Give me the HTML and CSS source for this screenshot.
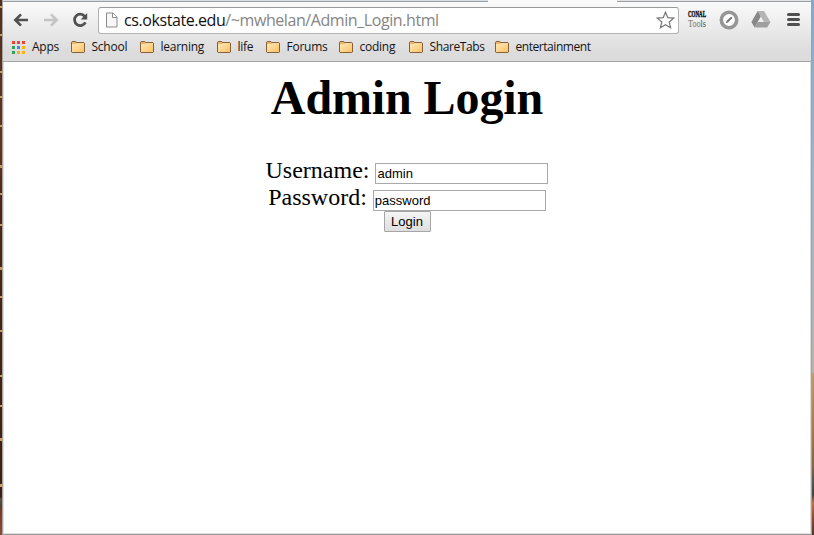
FILE: index.html
```html
<!DOCTYPE html>
<html lang="en">
<head>
<meta charset="utf-8">
<title>Admin Login</title>
<link rel="stylesheet" href="styles.css">
</head>
<body>
<svg class="defs" width="0" height="0">
  <defs>
    <linearGradient id="fold" x1="0" y1="0" x2="1" y2="1"><stop offset="0" stop-color="#ffe9b8"/><stop offset="1" stop-color="#fbc267"/></linearGradient>
    <symbol id="folder" viewBox="0 0 16 14">
      <path d="M1.5 12V2.2L2.2 1.5H5.8L6.5 2.5H13.8L14.5 3.2V12L13.8 12.5H2.2Z" fill="#e9b569" stroke="#87603b"/>
      <path d="M2 4.5L2.7 3.9H6.3L7.2 3H14V12H2Z" fill="url(#fold)"/>
    </symbol>
  </defs>
</svg>
<div class="desktop">
  <div class="edge left"></div>
  <div class="window">
    <header>
      <div class="tabs"><i class="tab-a"></i><i class="active"></i><i class="tab-b"></i></div>
      <div class="toolbar">
        <svg class="back" width="16" height="14" viewBox="0 0 16 14" fill="none" stroke="#505050" stroke-width="2.6"><path d="M15 7H3M8 1.3L2.3 7L8 12.7"/></svg>
        <svg class="forward" width="16" height="14" viewBox="0 0 16 14" fill="none" stroke="#c4c4c4" stroke-width="2.6"><path d="M1 7H13M8 1.3L13.7 7L8 12.7"/></svg>
        <svg class="reload" width="16" height="16" viewBox="0 0 16 16"><path d="M12.7 4.3A5.7 5.7 0 1 0 13.4 10.3" fill="none" stroke="#505050" stroke-width="2.7"/><path d="M15.2 1V7.5H8.7Z" fill="#505050"/></svg>
        <div class="address">
          <svg width="13" height="16" viewBox="0 0 13 16"><path d="M1.5 1H8L12 5V15H1.5Z" fill="#f8f8f8" stroke="#8b8b8b"/><path d="M7.5 1V5.5H12" fill="#fff" stroke="#8b8b8b"/></svg>
          <span class="url">cs.okstate.edu<span>/~mwhelan/Admin_Login.html</span></span>
          <svg class="star" width="19" height="18" viewBox="0 0 19 18"><path d="M9.5 1.2L11.8 6.6L17.7 7.1L13.2 11L14.6 16.7L9.5 13.7L4.4 16.7L5.8 11L1.3 7.1L7.2 6.6Z" fill="#fff" stroke="#777" stroke-width="1.2"/></svg>
        </div>
        <svg class="tools" width="22" height="24" viewBox="0 0 22 24"><text class="conal" x="1" y="9" textLength="18" lengthAdjust="spacingAndGlyphs">CONAL</text><text class="tool" x="1" y="19" textLength="18" lengthAdjust="spacingAndGlyphs">Too<tspan class="dark">ls</tspan></text></svg>
        <svg class="compass" width="20" height="20" viewBox="0 0 20 20"><circle cx="10" cy="10" r="7.7" fill="#fff" stroke="#969696" stroke-width="3.6"/><path d="M6.8 13.2L7.6 10.8L12 6.8L13.3 7.2L13 8.4L9 12.4Z" fill="#777"/></svg>
        <svg class="drive" width="20" height="17" viewBox="0 0 20 17"><path d="M6.7 0H13L19.4 11H13Z" fill="#b5b5b5"/><path d="M6.7 0L.4 11L3.6 16.5L9.8 5.5Z" fill="#888"/><path d="M6.8 11H19.4L16.2 16.5H3.6Z" fill="#9f9f9f"/></svg>
        <svg class="menu" width="13" height="13" viewBox="0 0 13 13"><path d="M1.5 1.5H11.5M1.5 6.5H11.5M1.5 11.5H11.5" stroke="#505050" stroke-width="3" stroke-linecap="round"/></svg>
      </div>
      <nav>
        <a class="apps"><svg width="13" height="13" viewBox="0 0 13 13"><path fill="#ea4335" d="M0 0h3v3H0zM5 0h3v3H5zM10 0h3v3h-3z"/><path fill="#34a05a" d="M0 5h3v3H0zM0 10h3v3H0z"/><path fill="#4285f4" d="M5 5h3v3H5z"/><path fill="#fbb30c" d="M10 5h3v3h-3zM5 10h3v3H5zM10 10h3v3h-3z"/></svg><span>Apps</span></a>
        <a class="school"><svg><use href="#folder"/></svg><span>School</span></a>
        <a class="learning"><svg><use href="#folder"/></svg><span>learning</span></a>
        <a class="life"><svg><use href="#folder"/></svg><span>life</span></a>
        <a class="forums"><svg><use href="#folder"/></svg><span>Forums</span></a>
        <a class="coding"><svg><use href="#folder"/></svg><span>coding</span></a>
        <a class="share"><svg><use href="#folder"/></svg><span>ShareTabs</span></a>
        <a class="fun"><svg><use href="#folder"/></svg><span>entertainment</span></a>
      </nav>
    </header>
    <main>
      <h1>Admin Login</h1>
      <form>
        <label class="row">Username: <input type="text" value="admin"></label>
        <label class="row">Password: <input type="text" value="password"></label>
        <button type="button">Login</button>
      </form>
    </main>
  </div>
  <div class="edge right"></div>
</div>
</body>
</html>
```
FILE: styles.css
```css
* { box-sizing: border-box; }
body { margin: 0; background: #fff; overflow: hidden; }
svg { flex: none; display: block; }
.defs { position: absolute; }
.desktop { display: flex; height: 535px; }
.edge { width: 2px; flex: none; }
.left { background:
  linear-gradient(transparent 497px, #5c5048 499px, #4c4038 506px, #7b3b22 510px, #8a4a30 535px),
  linear-gradient(transparent 6px, #c99a58 6px 8px, transparent 8px 34px, #c99a58 34px 36px, transparent 36px 71px, #c99a58 71px 73px, transparent 73px 96px, #c99a58 96px 98px, transparent 98px 125px, #c99a58 125px 127px, transparent 127px 165px, #c99a58 165px 168px, transparent 168px 193px, #c99a58 193px 195px, transparent 195px 224px, #c99a58 224px 226px, transparent 226px 267px, #c99a58 267px 270px, transparent 270px 296px, #c99a58 296px 298px, transparent 298px 330px, #c99a58 330px 332px, transparent 332px 375px, #c99a58 375px 377px, transparent 377px 405px, #c99a58 405px 407px, transparent 407px 438px, #d0a050 438px 441px, transparent 441px 484px, #d0a050 484px 487px, transparent 487px),
  linear-gradient(#54301b, #63341a 150px, #4c2714 200px, #3f1f11 500px); }
.right { background: linear-gradient(#83aad3 0, #9cb7d1 180px, #b9b5ad 372px, #c39b66 374px, #a67843 433px, #8c653e 465px, #56554a 482px, #44483f 495px, #c27243 503px, #8f4a2b 518px, #593324 535px); }
.window { width: 810px; flex: none; display: flex; flex-direction: column; border-left: 1px solid #a5a5a5; border-right: 1px solid #a0a0a0; border-bottom: 1px solid #999; background: #fff; }
header { height: 62px; background: linear-gradient(#fafafa 2px, #dcdcdc 52px); border-bottom: 1px solid #a4a4a4; flex: none; }
.tabs { display: flex; height: 2px; }
.tabs i { border-bottom: 1px solid #9a9fa4; background: #d8dde2; }
.tabs .tab-a { width: 485px; }
.tabs .active { width: 129px; background: #fafafa; border-color: #fafafa; }
.tabs .tab-b { flex: 1; background: #e2e2e2; }
.toolbar { display: flex; height: 35px; align-items: center; padding-left: 10px; }
.forward { margin-left: 14px; }
.reload { margin-left: 13px; }
.address { width: 581px; height: 27px; margin-left: 10px; margin-top: 1px; border: 1px solid #b2b2b2; border-top-color: #999; border-radius: 3px; background: #fff; display: flex; align-items: center; padding: 0 3px 0 6px; flex: none; }
.url { font: 16px/24px "Open Sans", sans-serif; letter-spacing: -.42px; margin-left: 6px; color: #111; white-space: nowrap; }
.url span { color: #858585; }
.star { margin-left: auto; }
.tools { margin-left: 8px; font-family: "Liberation Serif", serif; overflow: visible; }
.conal { font-size: 8px; font-weight: bold; fill: #111; stroke: #111; stroke-width: .4px; }
.tool { font-size: 9.5px; fill: #777; }
.dark { fill: #444; }
.compass { margin-left: 10px; }
.drive { margin-left: 12px; }
.menu { margin-left: 16px; }
nav { display: flex; height: 20px; padding-left: 9px; align-items: center; font: 12px/16px "Open Sans", sans-serif; color: #151515; }
nav a { display: flex; align-items: center; flex: none; white-space: nowrap; letter-spacing: -.25px; }
nav a svg { width: 16px; height: 14px; }
nav a span { margin-left: 5.5px; }
nav .apps { width: 58px; }
nav .apps svg { width: 13px; height: 13px; }
nav .apps span { margin-left: 7px; }
nav .school { width: 69px; }
nav .learning { width: 77px; }
nav .life { width: 49px; }
nav .forums { width: 73px; }
nav .coding { width: 70px; }
nav .share { width: 86px; letter-spacing: -.4px; }
nav .fun { letter-spacing: -.45px; }
main { flex: 1; border: 1px solid #ddd; border-top: 0; border-width: 0 1px 1px; font-family: "Liberation Serif", serif; font-size: 24px; color: #000; padding-top: 9px; }
h1 { margin: 0 0 32px; font-size: 48px; line-height: 54px; letter-spacing: -.1px; text-align: center; }
form { display: flex; flex-direction: column; align-items: center; }
.row { display: flex; height: 27px; line-height: 27px; white-space: pre; }
input { width: 173px; height: 21px; margin-top: 6px; padding: 1px; border: 1px solid #a9a9a9; font: 13px "Liberation Sans", sans-serif; color: #000; background: #fff; outline: 0; }
button { width: 47px; height: 21px; padding: 0; margin: 0; border: 1px solid #a5a5a5; border-radius: 1px; font: 13px "Liberation Sans", sans-serif; color: #000; background: linear-gradient(#f5f5f5, #dedede); }
```
